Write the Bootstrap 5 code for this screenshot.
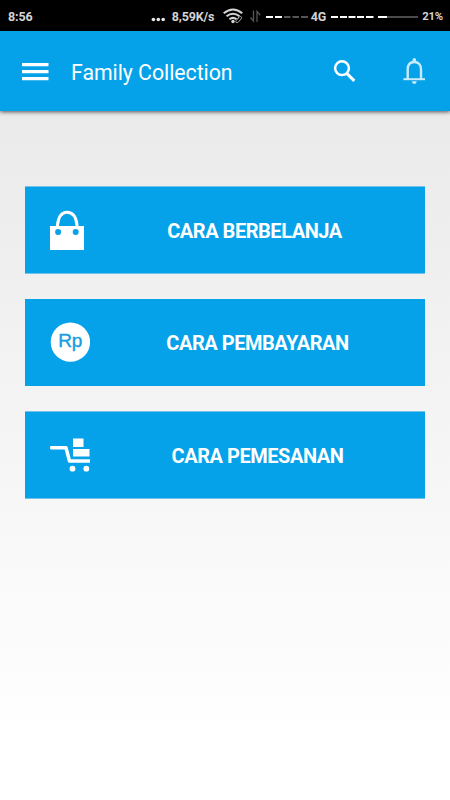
<!DOCTYPE html>
<html lang="id">
<head>
<meta charset="utf-8">
<meta name="viewport" content="width=device-width, initial-scale=1">
<title>Family Collection</title>
<link href="https://cdn.jsdelivr.net/npm/bootstrap@5.3.0/dist/css/bootstrap.min.css" rel="stylesheet">
<style>
body { font-family: Roboto, "Liberation Sans", sans-serif; height: 800px; background: linear-gradient(#eaeaea 110px, #fff 740px); }
svg { display: block; flex: none; }
.status-bar { height: 31px; background: #000; color: #d4d4d4; font-size: 12.5px; font-weight: 700; line-height: 33px; padding: 0 8px; white-space: nowrap; letter-spacing: -.15px; }
.status-bar span { padding-top: 1px; }
.status-bar svg { margin-top: 1px; }
.net-speed { margin-left: 6px; width: 50px; }
.battery-text { font-size: 11.3px; margin-left: 3px; margin-right: -1px; }
.app-bar { height: 80px; background: #05a2ea; padding: 2px 25px 0 22px; box-shadow: 0 1px 4px rgba(0,0,0,.65); }
.app-title { font-size: 21.3px; line-height: 28px; margin-left: 22px; padding-top: 1px; letter-spacing: -.04px; }
.bell { margin-left: 46px; margin-bottom: 2px; }
.menu-list { padding: 75px 25px 0; gap: 25px; }
.menu-btn { height: 88px; background: #05a2ea; border: solid #74c2ea; border-width: 1px 0; border-radius: 0; padding: 0 0 0 25px; font-size: 20px; font-weight: 700; line-height: 24px; letter-spacing: -.46px; }
.menu-btn.flat { height: 87px; border-width: 0; padding-bottom: 1px; }
.menu-label { padding-top: 2px; }
.label-first { padding-right: 6px; }
</style>
</head>
<body class="m-0 overflow-hidden">
<div class="status-bar d-flex align-items-center">
  <span>8:56</span>
  <svg class="ms-auto" width="15" height="31" fill="#e8e8e8"><circle cx="2.4" cy="18.5" r="1.8"/><circle cx="7.3" cy="18.5" r="1.8"/><circle cx="12.2" cy="18.5" r="1.8"/></svg>
  <span class="net-speed">8,59K/s</span>
  <svg width="89" height="31" viewBox="222 0 89 31" fill="none">
    <g stroke="#d4d4d4" stroke-width="2"><path d="M223.7 12.3Q233 4.800 242.300 12.300M226.500 15.300Q233 10.200 239.500 15.300M229.400 18.300Q233 15.500 236.600 18.300"/></g>
    <circle cx="233" cy="20.500" r="1.700" fill="#d4d4d4"/>
    <path d="M238 20l4-4.500" stroke="#000" stroke-width="4"/>
    <path d="M237 18.300l2-2.200q1.400-1.200 2.300-.3t-.2 2.200l-2.700 3q-1.400 1.300-2.300.4t.3-2.100l2.200-2.400" stroke="#aaa" stroke-width="1"/>
    <path d="M250.500 16.500l3 3.500V9.500M257 21V10.500l3.300 3.800" stroke="#555" stroke-width="1.300"/>
    <path d="M266 16h7M275 16h7" stroke="#fff" stroke-width="2"/>
    <path d="M284 16h6.500M292.500 16h6.500M301 16h7" stroke="#555" stroke-width="2"/>
  </svg>
  <span>4G</span>
  <svg class="ms-1" width="89" height="31" viewBox="330 0 89 31" fill="none" stroke-width="2">
    <path d="M331 16h7M340 16h7M348.500 16h7M357 16h7M366 16h7.500M378 16h9" stroke="#fff"/><path d="M387 16h31" stroke="#4b4b4b"/>
  </svg>
  <span class="battery-text">21%</span>
</div>
<header class="app-bar navbar navbar-dark d-flex flex-nowrap align-items-center justify-content-start text-white">
  <svg width="27" height="18" fill="#fff"><path d="M0 0h26.500v3.300H0zM0 7h26.500v3.300H0zM0 14h26.500v3.300H0z"/></svg>
  <span class="app-title">Family Collection</span>
  <svg class="ms-auto" width="24" height="24" viewBox="333 59 24 24" fill="none" stroke="#fff"><circle cx="342" cy="67.200" r="6.900" stroke-width="2.500"/><path d="M347 72.600l7.300 7.300" stroke-width="3"/></svg>
  <svg class="bell" width="22" height="27" viewBox="403 58 22 27" fill="none" stroke="#c9eafa"><path d="M407.700 79V69.500C407.700 64.500 410.500 62 414.300 62S421 64.500 421 69.500V79" stroke-width="2.400"/><path d="M403.400 79.200h21.600" stroke-width="2"/><path d="M412.500 61v-1q0-2 1.800-2t1.800 2v1zM411.800 81.300h5q-.3 2.600-2.500 2.600t-2.500-2.600z" fill="#c9eafa" stroke="none"/></svg>
</header>
<main class="menu-list d-flex flex-column">
  <button class="menu-btn btn btn-primary d-flex align-items-center w-100">
    <svg width="40" height="40" viewBox="50 210 40 40"><path d="M57.500 228v-3C58.500 216 62 212.200 67 212.200S76 216 77 225v3" fill="none" stroke="#fff" stroke-width="3"/><path d="M50 226h34v24H50z" fill="#fff"/><g fill="#05a2ea"><circle cx="58.100" cy="232" r="3"/><circle cx="75.700" cy="232" r="3"/></g></svg>
    <span class="menu-label label-first flex-grow-1 text-center">CARA BERBELANJA</span>
  </button>
  <button class="menu-btn flat btn btn-primary d-flex align-items-center w-100">
    <svg width="40" height="40" viewBox="0 0 40 40"><circle cx="20.400" cy="20.100" r="19.700" fill="#fff"/><text x="20.300" y="25.300" text-anchor="middle" font-family="Liberation Sans, sans-serif" font-size="19" font-weight="400" letter-spacing="0" fill="#149edc" stroke="#149edc" stroke-width=".4">Rp</text></svg>
    <span class="menu-label flex-grow-1 text-center">CARA PEMBAYARAN</span>
  </button>
  <button class="menu-btn btn btn-primary d-flex align-items-center w-100">
    <svg width="40" height="40" viewBox="50 435 40 40" fill="#fff"><path d="M51.500 447.700H66L69.500 461H90" fill="none" stroke="#fff" stroke-width="3.500" stroke-linecap="round" stroke-linejoin="round"/><path d="M73 438.500h10.500v8.500H73zM73 449h16.500v7.500H73z"/><circle cx="72.500" cy="468.700" r="2.900"/><circle cx="86.300" cy="468.700" r="2.900"/></svg>
    <span class="menu-label flex-grow-1 text-center">CARA PEMESANAN</span>
  </button>
</main>
<script src="https://cdn.jsdelivr.net/npm/bootstrap@5.3.0/dist/js/bootstrap.bundle.min.js"></script>
</body>
</html>
